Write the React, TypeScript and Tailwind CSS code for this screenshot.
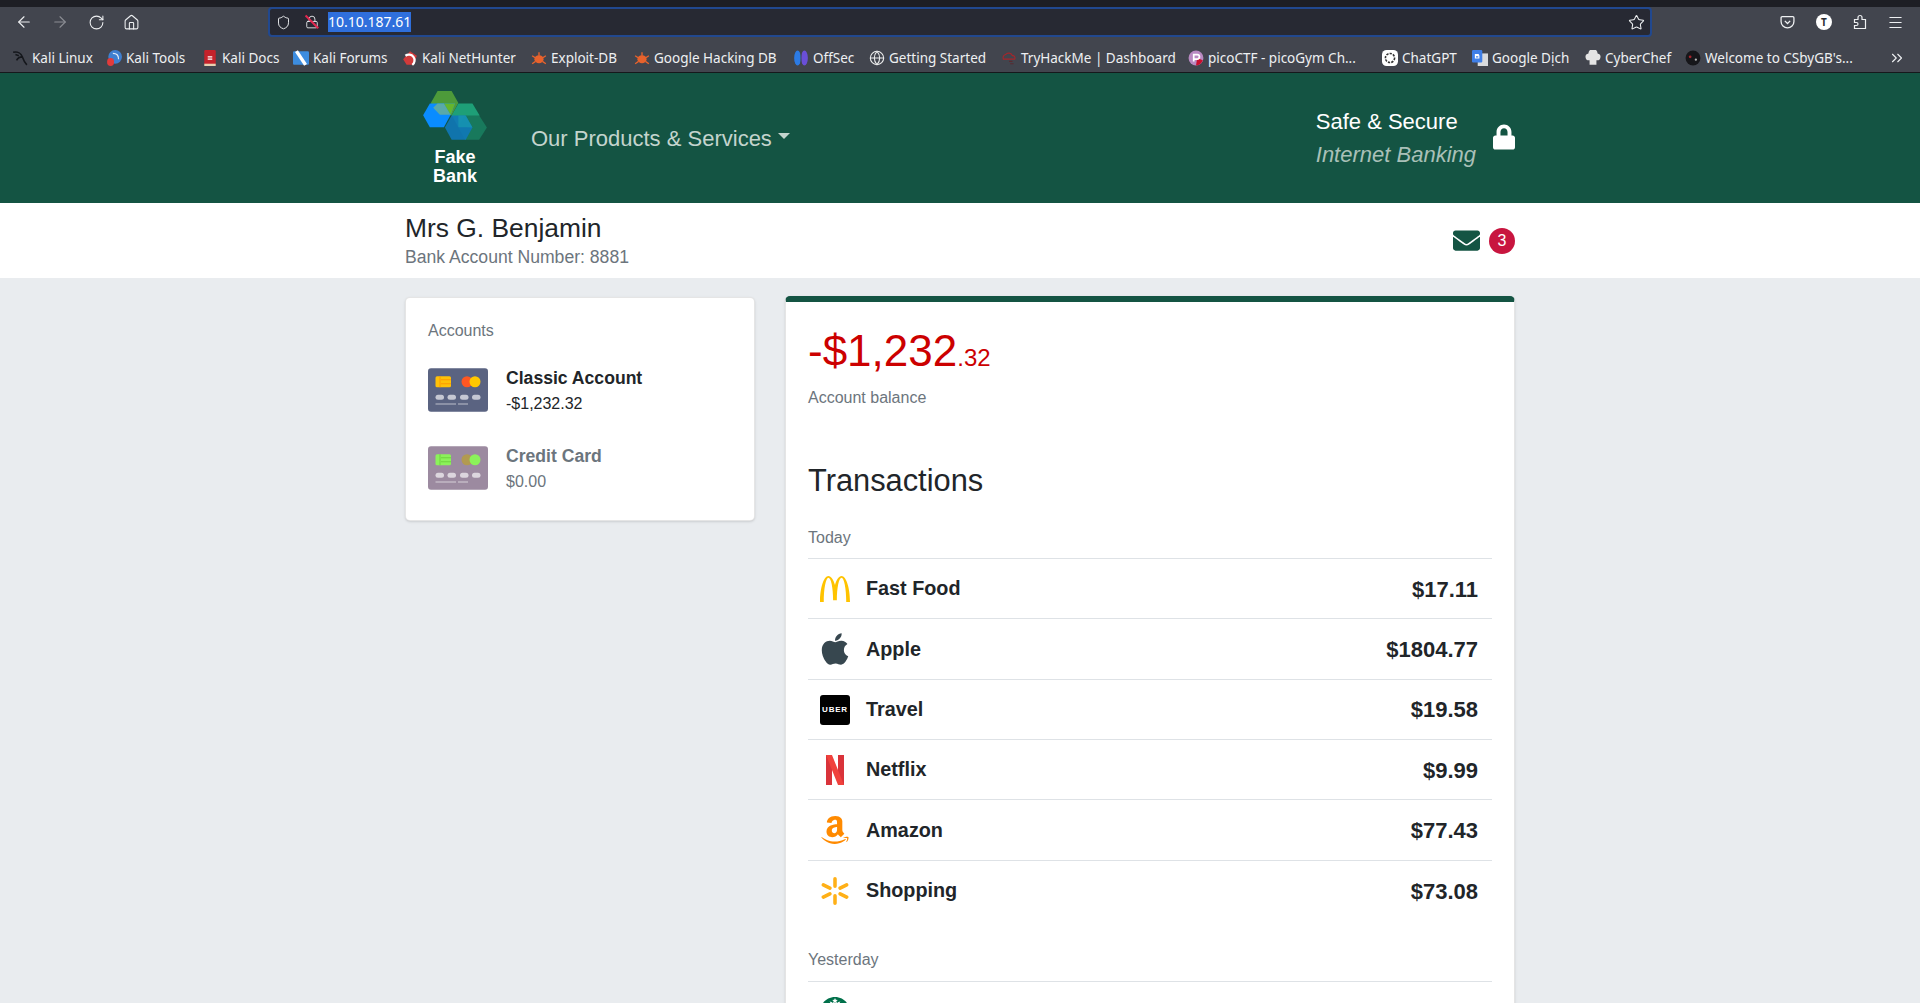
import { ReactNode } from "react";
import { ArrowLeft, ArrowRight, RotateCw, Home, Shield, Lock, Star, Menu, ChevronsRight, Globe } from "lucide-react";
import { FaLock, FaEnvelope, FaApple, FaAmazon } from "react-icons/fa";
import { SiMcdonalds, SiStarbucks } from "react-icons/si";

const sans = "font-['Liberation_Sans',Arial,sans-serif]";

function Fav({ children }: { children: ReactNode }) {
  return (
    <svg viewBox="0 0 14 14" className="w-[16px] h-[16px] shrink-0">
      {children}
    </svg>
  );
}

const exploit = (
  <Fav>
    <ellipse cx="7" cy="8" rx="4" ry="3.5" fill="#e8622c" />
    <path d="M1 5l3 2M13 5l-3 2M1 12l3-2M13 12l-3-2M7 2v3" stroke="#e8622c" strokeWidth="1.2" />
  </Fav>
);

const bookmarks: { label: string; w: string; icon: ReactNode }[] = [
  {
    label: "Kali Linux",
    w: "w-[61px]",
    icon: (
      <Fav>
        <path d="M1 2c4-1 7 1 8 4s2 5 4 7M9 6C7 6 5 7 4 9M3 4l3 1" fill="none" stroke="#15171c" strokeWidth="1.4" />
      </Fav>
    ),
  },
  {
    label: "Kali Tools",
    w: "w-[63px]",
    icon: (
      <Fav>
        <circle cx="8" cy="6" r="6" fill="#3f7fd0" />
        <path d="M6 3c3 0 5 2 5 5" fill="none" stroke="#dfe9f7" />
        <rect x="1" y="7" width="6" height="7" rx="3" fill="#e23b3b" />
      </Fav>
    ),
  },
  {
    label: "Kali Docs",
    w: "w-[58px]",
    icon: (
      <Fav>
        <rect x="2" y="0" width="10" height="13" rx="1" fill="#c5222b" />
        <rect x="2" y="12" width="10" height="2" fill="#e8d0b0" />
        <path d="M5 6h4M5 8h4" stroke="#fff" />
      </Fav>
    ),
  },
  {
    label: "Kali Forums",
    w: "w-[76px]",
    icon: (
      <Fav>
        <rect x="0" y="1" width="14" height="12" rx="1" fill="#3d8de0" />
        <path d="M3 1l8 12" stroke="#fff" strokeWidth="3" />
      </Fav>
    ),
  },
  {
    label: "Kali NetHunter",
    w: "w-[96px]",
    icon: (
      <Fav>
        <path d="M1 8l6-7 6 4-3 8H4z" fill="#d23a3a" />
        <path d="M3 5a5 5 0 0 1 6 8" fill="none" stroke="#fff" strokeWidth="2" />
      </Fav>
    ),
  },
  { label: "Exploit-DB", w: "w-[70px]", icon: exploit },
  { label: "Google Hacking DB", w: "w-[126px]", icon: exploit },
  {
    label: "OffSec",
    w: "w-[43px]",
    icon: (
      <Fav>
        <ellipse cx="4" cy="7" rx="3" ry="6.5" fill="#2c7be5" />
        <ellipse cx="10" cy="7" rx="3" ry="6.5" fill="#6a4fd8" />
        <rect x="6.6" y="0" width="0.8" height="14" fill="#42454e" />
      </Fav>
    ),
  },
  {
    label: "Getting Started",
    w: "w-[99px]",
    icon: <Globe className="w-[16px] h-[16px] shrink-0 text-[#eceded]" strokeWidth={1.6} />,
  },
  {
    label: "TryHackMe | Dashboard",
    w: "w-[154px]",
    icon: (
      <Fav>
        <path d="M2 8a3 3 0 0 1 2-4 3.500 3.500 0 0 1 6 1 2 2 0 0 1 2 3z" fill="none" stroke="#a5262b" />
        <path d="M7 10h3M8 12h3" stroke="#5a2a30" />
      </Fav>
    ),
  },
  {
    label: "picoCTF - picoGym Ch...",
    w: "w-[161px]",
    icon: (
      <Fav>
        <circle cx="7" cy="7" r="6.500" fill="#b98ac2" />
        <path d="M7 13.500A6.500 6.500 0 0 0 13 9L8 7z" fill="#c8102e" />
        <path d="M5 10V4h3a1.500 1.500 0 0 1 0 4H5" fill="none" stroke="#fff" strokeWidth="1.500" />
      </Fav>
    ),
  },
  {
    label: "ChatGPT",
    w: "w-[57px]",
    icon: (
      <Fav>
        <rect width="14" height="14" rx="4" fill="#fff" />
        <circle cx="7" cy="7" r="4" fill="none" stroke="#333" strokeWidth="1.400" strokeDasharray="2 1" />
      </Fav>
    ),
  },
  {
    label: "Google Dịch",
    w: "w-[80px]",
    icon: (
      <Fav>
        <rect x="5" y="3" width="9" height="11" fill="#d8dadd" />
        <rect x="0" y="0" width="9" height="11" rx="1" fill="#3f7fe8" />
        <path d="M3 5h3v2H3V4h3" fill="none" stroke="#fff" />
      </Fav>
    ),
  },
  {
    label: "CyberChef",
    w: "w-[67px]",
    icon: (
      <Fav>
        <path d="M4 9a3 3 0 0 1-1-6 4 4 0 0 1 8 0 3 3 0 0 1-1 6v4H4z" fill="#e4e4e4" />
      </Fav>
    ),
  },
  {
    label: "Welcome to CSbyGB's...",
    w: "w-[160px]",
    icon: (
      <Fav>
        <circle cx="7" cy="7" r="6.500" fill="#16161a" />
        <circle cx="4.500" cy="6" r="1.200" fill="#a8242c" />
        <circle cx="9.500" cy="8.500" r="1" fill="#b8b8b8" />
      </Fav>
    ),
  },
];

function BrowserChrome() {
  return (
    <div className="shrink-0 bg-[#42454e] font-['Noto_Sans',sans-serif] text-[#eef0f2]">
      <div className="h-[7px] bg-[#1d1e24]" />
      <div className="h-[30px] flex items-center pl-[15px]">
        <ArrowLeft className="w-[18px] h-[18px]" strokeWidth={1.5} />
        <ArrowRight className="w-[18px] h-[18px] ml-[18px] text-[#8b8d93]" strokeWidth={1.5} />
        <RotateCw className="w-[17px] h-[17px] ml-[19px]" strokeWidth={1.5} />
        <Home className="w-[17px] h-[17px] ml-[18px]" strokeWidth={1.5} />
        <div className="ml-[128px] w-[1384px] h-[30px] flex items-center bg-[#272933] border-2 border-[#21488f] rounded-[4px] pl-[6px] pr-[5px]">
          <Shield className="w-[15px] h-[15px]" strokeWidth={1.500} />
          <span className="relative ml-[14px] w-[14px] h-[16px] flex items-center justify-center">
            <Lock className="w-[14px] h-[14px]" strokeWidth={1.500} />
            <span className="absolute left-[6px] top-[-1px] h-[18px] w-[1.500px] bg-[#e22850] -rotate-45" />
          </span>
          <span className="ml-[9px] bg-[#2f6fdc] text-white text-[14px] leading-[20px] whitespace-nowrap">10.10.187.61</span>
          <Star className="w-[17px] h-[17px] ml-auto" strokeWidth={1.500} />
        </div>
        <svg viewBox="0 0 14 14" className="w-[15px] h-[15px] ml-[128px]" fill="none" stroke="currentColor" strokeWidth="1.200">
          <path d="M2 1.500h10a1 1 0 0 1 1 1V6a6 6 0 0 1-12 0V2.500a1 1 0 0 1 1-1z" />
          <path d="M4.500 5.500L7 8l2.500-2.500" />
        </svg>
        <span className="ml-[21px] w-[16px] h-[16px] rounded-full bg-white text-[#2a2c33] text-[10px] font-bold flex items-center justify-center">T</span>
        <svg viewBox="0 0 14 16" className="w-[14px] h-[16px] ml-[21px]" fill="none" stroke="currentColor" strokeWidth="1.200">
          <path d="M1.500 5.500H5V3.500a2 2 0 0 1 4 0v2h3.500v9H1.500v-3h2a1.500 1.500 0 0 0 0-3h-2z" />
        </svg>
        <Menu className="w-[17px] h-[17px] ml-[20px]" strokeWidth={1.500} />
      </div>
      <div className="h-[36px] pt-[7px] flex items-center pl-[12px] pr-[14px] gap-[13px] border-b border-[#16181c] text-[13.500px]">
        {bookmarks.map((b) => (
          <div key={b.label} className="flex items-center gap-[4px]">
            {b.icon}
            <span className={`${b.w} whitespace-nowrap`}>{b.label}</span>
          </div>
        ))}
        <ChevronsRight className="w-[18px] h-[18px] ml-auto" strokeWidth={1.500} />
      </div>
    </div>
  );
}

function Logo() {
  return (
    <div className="w-[66px] flex flex-col items-center">
      <svg viewBox="0 0 190 146" className="w-[64px] h-[49px]">
        <polygon points="43,0 85,0 105,36 85,72 43,72 23,36" fill="#4d9a3a" />
        <polygon points="20,37 62,37 95,37 82,71 62,108 20,108 0,72" fill="#0a8cff" />
        <polygon points="105,37 147,37 168,72 147,108 105,108 85,72" fill="#1fa37a" opacity="0.95" />
        <polygon points="125,73 167,73 190,109 167,145 125,145 105,109" fill="#18795c" />
        <polygon points="85,73 127,73 147,109 127,145 85,145 65,109" fill="#0f78b8" opacity="0.9" />
        <polygon points="43,37 62,37 82,71 50,71 30,50" fill="#5aa9a9" />
        <polygon points="62,37 95,37 82,71" fill="#65b52c" />
        <polygon points="105,73 127,73 147,109 127,108 105,108" fill="#189ab0" opacity="0.7" />
      </svg>
      <div className="mt-[8px] text-white font-bold text-[18px] leading-[19px] text-center">
        Fake
        <br />
        Bank
      </div>
    </div>
  );
}

function CardIcon({ bg, chip, chipLine, c1, c2 }: { bg: string; chip: string; chipLine: string; c1: string; c2: string }) {
  return (
    <svg viewBox="0 0 60 43.500" className="w-[60px] h-[44px] shrink-0 mb-[2px]">
      <rect width="60" height="43.500" rx="3" fill={bg} />
      <rect x="7.500" y="8" width="15.500" height="11" rx="1.500" fill={chip} />
      <path d="M12 8v11M13 11.500h10M13 15.500h10" stroke={chipLine} strokeWidth="1" />
      <circle cx="39" cy="13.500" r="5.500" fill={c1} />
      <circle cx="47" cy="13.500" r="5.500" fill={c2} />
      <rect x="7.500" y="26.500" width="8.500" height="5" rx="2.500" fill="#ffffff" opacity="0.65" />
      <rect x="19.500" y="26.500" width="8.500" height="5" rx="2.500" fill="#ffffff" opacity="0.65" />
      <rect x="32" y="26.500" width="8.500" height="5" rx="2.500" fill="#ffffff" opacity="0.65" />
      <rect x="44" y="26.500" width="8.500" height="5" rx="2.500" fill="#ffffff" opacity="0.65" />
      <rect x="7.500" y="35" width="20.500" height="1.500" fill="#ffffff" opacity="0.4" />
      <rect x="30" y="35" width="10" height="1.500" fill="#ffffff" opacity="0.4" />
    </svg>
  );
}

function Netflix() {
  return (
    <svg viewBox="0 0 18 30" className="w-[18px] h-[30px]">
      <rect x="0" y="0" width="6" height="30" fill="#d9333a" />
      <rect x="12" y="0" width="6" height="30" fill="#d9333a" />
      <polygon points="0,0 6,0 18,30 12,30" fill="#f0413c" />
    </svg>
  );
}

function Spark() {
  return (
    <svg viewBox="0 0 30 30" className="w-[28px] h-[30px]" stroke="#ffb017" strokeWidth="3.800" strokeLinecap="round">
      <path d="M15 2v8M15 20v8M2.500 8.500l7 3.500M20.500 18l7 3.500M2.500 21.500l7-3.500M20.500 12l7-3.500" />
    </svg>
  );
}

function Uber() {
  return (
    <div className="w-[30px] h-[30px] bg-black rounded-[3px] flex items-center justify-center text-white text-[8px] leading-none font-bold tracking-[0.8px]">
      UBER
    </div>
  );
}

const today = [
  { name: "Fast Food", amount: "$17.11", icon: <SiMcdonalds className="w-[30px] h-[30px] text-[#ffc300]" /> },
  { name: "Apple", amount: "$1804.77", icon: <FaApple className="w-[36px] h-[36px] shrink-0 text-[#37474f]" /> },
  { name: "Travel", amount: "$19.58", icon: <Uber /> },
  { name: "Netflix", amount: "$9.99", icon: <Netflix /> },
  { name: "Amazon", amount: "$77.43", icon: <FaAmazon className="w-[32px] h-[32px] shrink-0 text-[#ff8a00]" /> },
  { name: "Shopping", amount: "$73.08", icon: <Spark /> },
];

function Row({ name, amount, icon, last }: { name: string; amount: string; icon: ReactNode; last?: boolean }) {
  return (
    <div className={`h-[60.330px] pt-[1px] flex items-center pl-[12px] pr-[14px] text-[19.800px] font-bold text-[#212529] ${last ? "" : "border-b border-[#dee2e6]"}`}>
      <div className="w-[30px] flex justify-center">{icon}</div>
      <span className="ml-[16px]">{name}</span>
      <span className="ml-auto text-[22px]">{amount}</span>
    </div>
  );
}

export default function App() {
  return (
    <div className={`h-screen overflow-hidden flex flex-col bg-[#e9ecef] ${sans}`}>
      <BrowserChrome />

      <header className="shrink-0 h-[130px] bg-[#145443]">
        <div className="w-[1110px] mx-auto h-full flex items-center">
          <div className="ml-[17px]">
            <Logo />
          </div>
          <button className="ml-[43px] flex items-center text-[22px] text-[#c4d4ce]">
            Our Products &amp; Services
            <span className="ml-[6px] border-x-[6px] border-x-transparent border-t-[6px] border-t-[#c4d4ce] -mt-[4px]" />
          </button>
          <div className="ml-auto -mt-[1px] text-[22px] leading-[33px]">
            <div className="text-white">Safe &amp; Secure</div>
            <div className="italic text-[#a9c0b8]">Internet Banking</div>
          </div>
          <FaLock className="ml-[17px] mt-[-2px] w-[22px] h-[26px] text-white" />
        </div>
      </header>

      <div className="shrink-0 h-[75px] bg-white">
        <div className="w-[1110px] mx-auto h-full flex items-center">
          <div>
            <div className="text-[26.400px] leading-[32px] text-[#212529]">Mrs G. Benjamin</div>
            <div className="text-[17.600px] leading-[26px] text-[#6c757d]">Bank Account Number: 8881</div>
          </div>
          <FaEnvelope className="ml-auto w-[27px] h-[27px] text-[#145443]" />
          <span className="ml-[9px] w-[26px] h-[26px] rounded-full bg-[#c8153f] text-white text-[16px] flex items-center justify-center">3</span>
        </div>
      </div>

      <main className="w-[1110px] mx-auto pt-[18px] flex items-start gap-[30px]">
        <section className="w-[350px] h-[224px] bg-white border border-black/10 rounded-[5px] shadow-sm pl-[22px] pt-[21px] mt-[1px]">
          <div className="text-[16px] leading-[24px] text-[#6c757d]">Accounts</div>
          <div className="mt-[22px] flex items-center gap-[18px]">
            <CardIcon bg="#5a6381" chip="#ffc107" chipLine="#ff9800" c1="#ff5722" c2="#ffc800" />
            <div>
              <div className="text-[17.600px] leading-[27px] font-bold text-[#212529]">Classic Account</div>
              <div className="text-[16px] leading-[24px] text-[#212529]">-$1,232.32</div>
            </div>
          </div>
          <div className="mt-[27px] flex items-center gap-[18px]">
            <CardIcon bg="#9c8aa0" chip="#8bf25a" chipLine="#6fd33f" c1="#b29a50" c2="#8bf25a" />
            <div>
              <div className="text-[17.600px] leading-[27px] font-bold text-[#6c757d]">Credit Card</div>
              <div className="text-[16px] leading-[24px] text-[#6c757d]">$0.00</div>
            </div>
          </div>
        </section>

        <section className="w-[730px] h-[800px] bg-white border border-black/10 border-t-[6px] border-t-[#145443] rounded-[5px] shadow-sm px-[22px] pt-[25px]">
          <div className="text-[44px] leading-[48px] text-[#cc0000]">
            -$1,232<span className="text-[24px]">.32</span>
          </div>
          <div className="mt-[4px] text-[16px] leading-[24px] text-[#6c757d]">Account balance</div>
          <h2 className="mt-[52px] text-[30.800px] leading-[38px] text-[#212529]">Transactions</h2>
          <div className="mt-[26px] pb-[8px] text-[16px] leading-[24px] text-[#6c757d] border-b border-[#dee2e6]">Today</div>
          {today.map((t, i) => (
            <Row key={t.name} {...t} last={i === today.length - 1} />
          ))}
          <div className="mt-[27px] pb-[8px] h-[34px] text-[16px] leading-[24px] text-[#6c757d] border-b border-[#dee2e6]">Yesterday</div>
          <Row name="Starbucks" amount="$7.35" icon={<SiStarbucks className="w-[30px] h-[30px] text-[#00704a]" />} />
        </section>
      </main>
    </div>
  );
}
